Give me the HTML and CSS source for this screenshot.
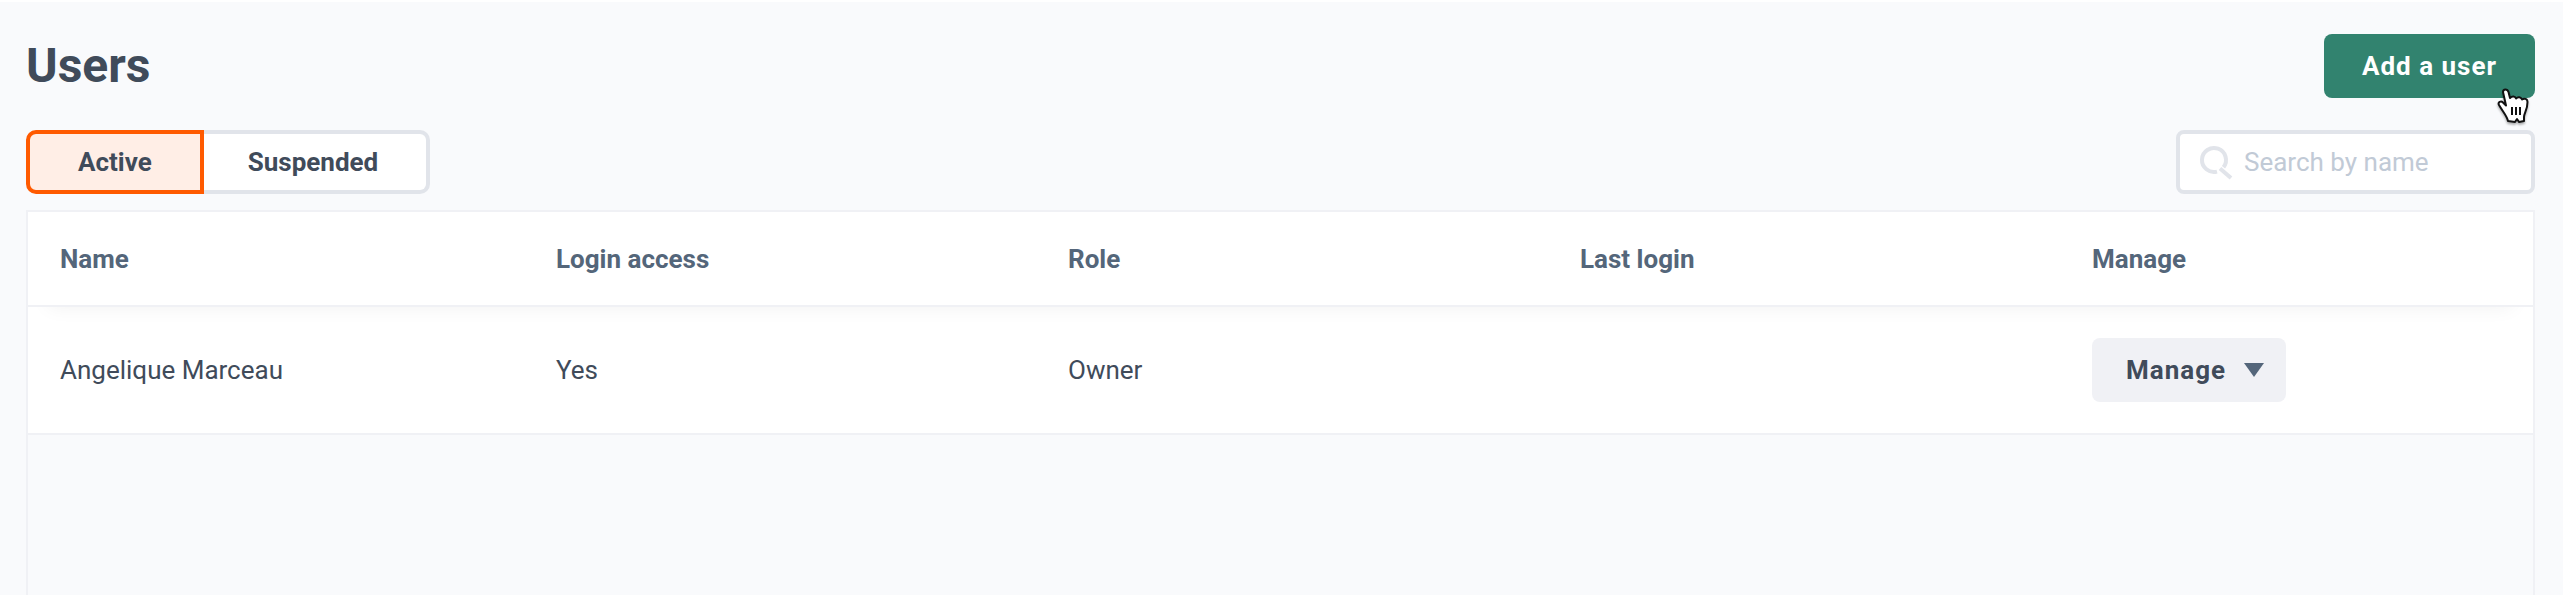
FILE: index.html
```
<!DOCTYPE html>
<html lang="en">
<head>
    <meta charset="UTF-8">
    <meta name="viewport" content="width=device-width, initial-scale=1.0">
    <title>Users</title>
    <link rel="stylesheet" href="styles.css">
</head>
<body>
    <main class="page">
        <header class="page-header">
            <h1>Users</h1>
            <div class="header-action">
                <button type="button" class="btn btn-primary">Add a user</button>
                <svg class="cursor" viewBox="0 0 34 38" aria-hidden="true">
                    <path d="M6 5C6 1.500 10.500 1.500 11.500 5L13 11C15 9 18 9 19 11.500C21 9.500 24 10 25 12.500C27 11 30.500 11.500 30.500 15C30.500 23 27 26 27 30V34L22 35L20 32L18 35L11 34C10 29 6 25 2 18C0.500 15 4 13.500 6 15.500L9 18.500Z"/>
                    <path d="M15 20v8M19 20v8M23 20v8"/>
                </svg>
            </div>
        </header>

        <div class="toolbar">
            <div class="tabs">
                <button type="button" class="tab active" aria-pressed="true">Active</button>
                <button type="button" class="tab" aria-pressed="false">Suspended</button>
            </div>
            <label class="search">
                <svg class="search-icon" viewBox="0 0 36 36" aria-hidden="true">
                    <path d="M19 27.600A12 12 0 1 1 25.500 23.300M22 24.500l11 9.500"/>
                </svg>
                <input type="text" placeholder="Search by name" aria-label="Search by name">
            </label>
        </div>

        <div class="table-wrap">
            <table class="users-table">
                <thead>
                    <tr>
                        <th scope="col">Name</th>
                        <th scope="col">Login access</th>
                        <th scope="col">Role</th>
                        <th scope="col">Last login</th>
                        <th scope="col">Manage</th>
                    </tr>
                </thead>
                <tbody>
                    <tr>
                        <td>Angelique Marceau</td>
                        <td>Yes</td>
                        <td>Owner</td>
                        <td></td>
                        <td>
                            <button type="button" class="btn btn-manage">
                                Manage
                                <svg class="caret" viewBox="0 0 20 14" aria-hidden="true"><path d="M0 0h20L10 14z"/></svg>
                            </button>
                        </td>
                    </tr>
                </tbody>
            </table>
        </div>
    </main>
</body>
</html>
```
FILE: styles.css
```
:root {
    --bg-page: #f9fafc;
    --bg-muted: #f0f1f5;
    --text-primary: #404b5a;
    --text-secondary: #54667a;
    --text-placeholder: #c1cad6;
    --border-color: #e1e4ea;
    --accent: #ff5a00;
    --accent-light: #ffeee6;
    --green: #32836f;
}

* {
    margin: 0;
    padding: 0;
    box-sizing: border-box;
}

body {
    background-color: var(--bg-page);
    color: var(--text-primary);
    font-family: Roboto, "Liberation Sans", sans-serif;
    font-size: 26px;
    line-height: 32px;
    min-height: 100vh;
    display: flex;
    flex-direction: column;
    border-top: 2px solid #fff;
}

button,
input {
    font: inherit;
    color: inherit;
}

button {
    cursor: pointer;
}

.page {
    flex: 1;
    display: flex;
    flex-direction: column;
    padding: 32px 28px 0 26px;
}

.page-header {
    display: flex;
    justify-content: space-between;
    align-items: center;
    margin-bottom: 32px;
}

h1 {
    font-size: 48px;
    line-height: 64px;
    font-weight: 700;
}

.header-action {
    position: relative;
}

.btn {
    height: 64px;
    padding: 0 38px;
    border: none;
    border-radius: 8px;
    font-weight: 700;
    letter-spacing: 1px;
}

.btn-primary {
    background-color: var(--green);
    color: #fff;
}

.cursor {
    position: absolute;
    right: 4px;
    bottom: -27px;
    width: 34px;
    height: 38px;
    fill: #fff;
    stroke: #111;
    stroke-width: 2;
    stroke-linejoin: round;
    filter: drop-shadow(0 2px 1px rgba(0, 0, 0, 0.3));
}

.toolbar {
    display: flex;
    justify-content: space-between;
    margin-bottom: 16px;
}

.tabs {
    display: flex;
}

.tab {
    height: 64px;
    padding: 0 48px 0 44px;
    background-color: #fff;
    border: 4px solid var(--border-color);
    border-left: none;
    border-radius: 0 10px 10px 0;
    font-weight: 700;
}

.tab:first-child {
    padding: 0 48px;
    border-left: 4px solid var(--border-color);
    border-radius: 10px 0 0 10px;
}

.tab.active {
    background-color: var(--accent-light);
    border-color: var(--accent);
}

.search {
    display: flex;
    align-items: center;
    gap: 10px;
    width: 359px;
    height: 64px;
    padding: 0 18px;
    background-color: #fff;
    border: 4px solid var(--border-color);
    border-radius: 8px;
}

.search-icon {
    flex: none;
    width: 36px;
    height: 36px;
    fill: none;
    stroke: var(--border-color);
    stroke-width: 4;
}

.search input {
    flex: 1;
    min-width: 0;
    border: none;
    outline: none;
    background: none;
}

.search input::placeholder {
    color: var(--text-placeholder);
    opacity: 1;
}

.table-wrap {
    flex: 1;
    border: 2px solid var(--bg-muted);
    border-bottom: none;
}

.users-table {
    width: 100%;
    table-layout: fixed;
    border-collapse: separate;
    border-spacing: 0;
    background-color: #fff;
}

th,
td {
    padding: 0 32px;
    text-align: left;
    border-bottom: 2px solid var(--bg-muted);
}

th {
    width: 20.44%;
    height: 95px;
    color: var(--text-secondary);
    font-weight: 700;
}

th:first-child {
    width: 19.8%;
}

th:last-child {
    width: auto;
}

td {
    height: 128px;
}

thead {
    box-shadow: 0 20px 20px -20px rgba(0, 0, 0, 0.06);
}

.btn-manage {
    display: flex;
    align-items: center;
    gap: 18px;
    padding: 0 22px 0 34px;
    background-color: var(--bg-muted);
}

.caret {
    width: 20px;
    height: 14px;
    fill: var(--text-secondary);
}
```
